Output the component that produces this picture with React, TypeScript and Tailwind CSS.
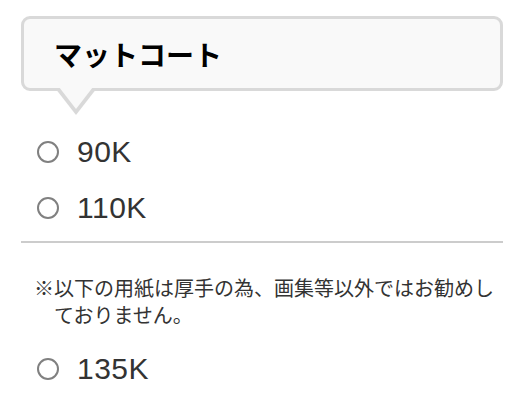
import React from "react";

const font = { fontFamily: '"Noto Sans CJK JP", "Noto Sans", sans-serif' };

function Radio({ label }: { label: string }) {
  return (
    <label className="flex h-[56px] items-center gap-[18px] pl-[16px] cursor-pointer">
      <span className="block h-[22px] w-[22px] shrink-0 rounded-full border-2 border-[#808080] bg-white" />
      <span className="font-['Liberation_Sans',Arial,sans-serif] text-[30px] leading-none tracking-[0.5px] text-[#333]">
        {label}
      </span>
    </label>
  );
}

export default function App() {
  return (
    <div className="h-[400px] w-[522px] overflow-hidden bg-white pl-[21px] pr-[19px] pt-[16px]" style={font}>
      <div className="relative flex h-[75px] items-center rounded-[9px] border-[3px] border-[#d9d9d9] bg-[#f9f9f9] pl-[30px]">
        <h2 className="text-[28px] font-bold leading-none text-black">マットコート</h2>
        <span className="absolute left-[31px] top-full h-0 w-0 border-x-[21px] border-t-[27px] border-x-transparent border-t-[#d9d9d9]" />
        <span className="absolute left-[35px] top-[calc(100%-1px)] h-0 w-0 border-x-[17px] border-t-[22px] border-x-transparent border-t-[#f9f9f9]" />
      </div>

      <div className="mt-[33px]">
        <Radio label="90K" />
        <Radio label="110K" />
      </div>

      <hr className="mt-[5px] border-0 border-t-2 border-[#cccccc]" />

      <p className="mt-[31px] flex pl-[13px] text-[20px] leading-[27px] text-[#333]">
        <span className="w-[20px] shrink-0">※</span>
        <span>以下の用紙は厚手の為、画集等以外ではお勧めしておりません。</span>
      </p>

      <div className="mt-[13px]">
        <Radio label="135K" />
      </div>
    </div>
  );
}
